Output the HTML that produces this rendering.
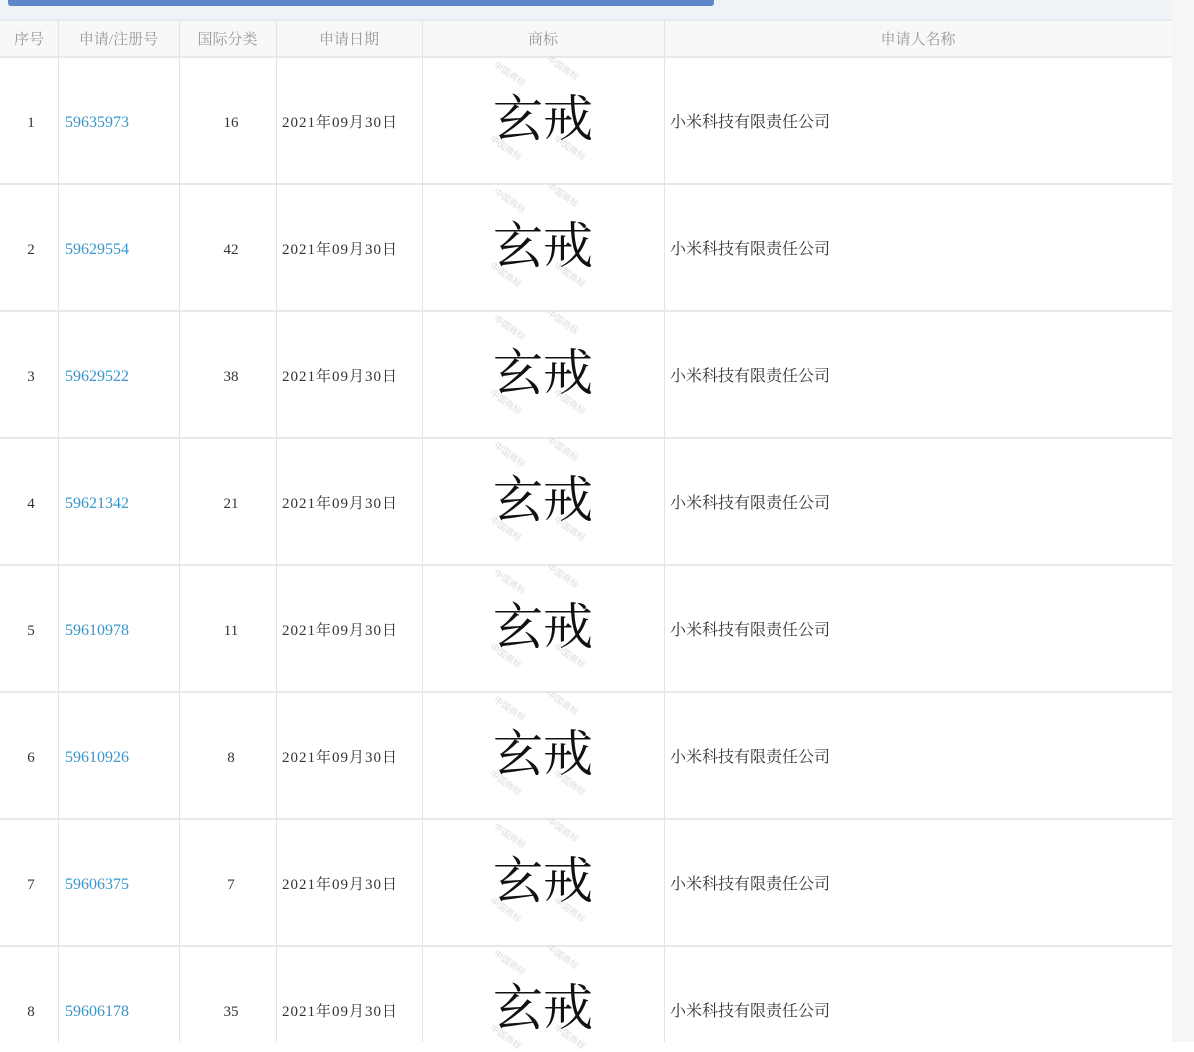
<!DOCTYPE html>
<html><head><meta charset="utf-8"><style>
*{margin:0;padding:0;box-sizing:border-box}
body{width:1194px;height:1042px;overflow:hidden;background:#fff;position:relative;font-family:"Liberation Serif","Noto Serif CJK SC",serif;color:#333}
.a{position:absolute}
.vl{position:absolute;top:20px;height:1022px;width:1px;background:#e2e4e6}
.hl{position:absolute;left:0;width:1172px;height:2px;background:#e6e8ea}
.h{position:absolute;top:22px;height:37px;line-height:37px;text-align:center;font-size:15px;color:#999}
.c{position:absolute;height:20px;line-height:20px;font-size:15px;color:#333;white-space:nowrap}
.tm{position:absolute;left:422px;width:242px;text-align:center;font-family:"Noto Serif CJK SC",serif;font-size:50px;color:#111;line-height:60px}
.wm{position:absolute;font-size:9px;color:#ddd;transform:rotate(35deg);font-family:"Noto Sans CJK SC",sans-serif}
</style></head><body>
<div class="a" style="left:0;top:0;width:1172px;height:20px;background:#eef3f8"></div>
<div class="a" style="left:8px;top:0;width:706px;height:6px;background:#5f86c8;border-radius:0 0 3px 3px"></div>
<div class="a" style="left:1172px;top:0;width:22px;height:1042px;background:#f6f6f6"></div>
<div class="a" style="left:0;top:20px;width:1172px;height:37px;background:#f7f8f8"></div>
<div class="hl" style="top:19px"></div>
<div class="hl" style="top:56px"></div>
<div class="vl" style="left:58px"></div>
<div class="vl" style="left:179px"></div>
<div class="vl" style="left:276px"></div>
<div class="vl" style="left:422px"></div>
<div class="vl" style="left:664px"></div>
<div class="h" style="left:0;width:58px">序号</div>
<div class="h" style="left:58px;width:121px">申请/注册号</div>
<div class="h" style="left:179px;width:97px">国际分类</div>
<div class="h" style="left:276px;width:146px">申请日期</div>
<div class="h" style="left:422px;width:242px">商标</div>
<div class="h" style="left:664px;width:508px">申请人名称</div>
<div id="rows"></div>
<script>
var d=[["1","59635973","16"],["2","59629554","42"],["3","59629522","38"],["4","59621342","21"],["5","59610978","11"],["6","59610926","8"],["7","59606375","7"],["8","59606178","35"]];
var h="";
d.forEach(function(r,i){var s=57+i*127,m=s+66;
if(i>0)h+='<div class="hl" style="top:'+(s-1)+'px"></div>';
h+='<div class="c" style="left:0;width:62px;text-align:center;top:'+(m-10)+'px">'+r[0]+'</div>';
h+='<div class="c" style="left:65px;top:'+(m-10)+'px;color:#3a95c8;font-size:16px">'+r[1]+'</div>';
h+='<div class="c" style="left:179px;width:104px;text-align:center;top:'+(m-10)+'px">'+r[2]+'</div>';
h+='<div class="c" style="left:282px;top:'+(m-10)+'px;letter-spacing:1px">2021年09月30日</div>';
h+='<div class="c" style="left:670px;top:'+(m-10)+'px;font-size:16px">小米科技有限责任公司</div>';
h+='<div class="wm" style="left:492px;top:'+(s+10)+'px">中国商标</div><div class="wm" style="left:545px;top:'+(s+4)+'px">中国商标</div>';
h+='<div class="wm" style="left:488px;top:'+(s+84)+'px">中国商标</div><div class="wm" style="left:552px;top:'+(s+84)+'px">中国商标</div>';
h+='<div class="tm" style="top:'+(s+28)+'px">玄戒</div>';
});
document.getElementById("rows").innerHTML=h;
</script>
</body></html>
